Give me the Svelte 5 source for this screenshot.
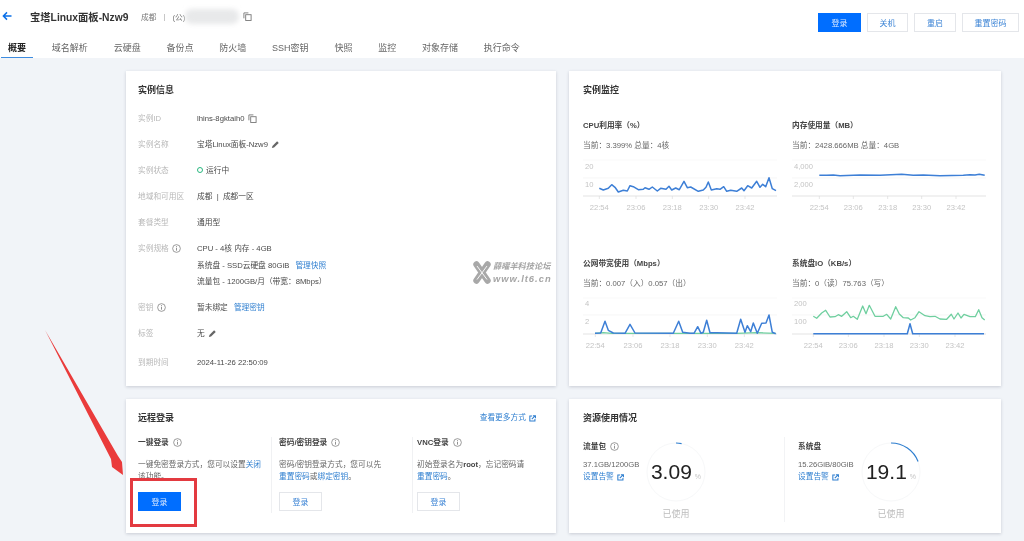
<script>
  const tabs = ["概要", "域名解析", "云硬盘", "备份点", "防火墙", "SSH密钥", "快照", "监控", "对象存储", "执行命令"];
  const times = ["22:54", "23:06", "23:18", "23:30", "23:42"];

  /* samples are [x, y] at 3x, shifted back by the chart offset */
  function pts(raw, ox, oy) {
    return raw.map(([x, y]) => (x / 3 - ox).toFixed(1) + "," + (y / 3 - oy).toFixed(1)).join(" ");
  }

  const charts = [
    {
      title: "CPU利用率（%）",
      sub: "当前：3.399% 总量：4核",
      yl: [["20", 8.7], ["10", 26.7]],
      yx: 2,
      ticks: [88, 198, 307, 416, 525].map((x) => x / 3 - 13),
      grid: 21,
      green: null,
      blue: pts([[88,355],[100,360],[115,355],[125,344],[135,352],[145,366],[160,361],[172,363],[180,347],[190,350],[205,359],[220,358],[225,353],[237,358],[247,351],[262,363],[272,355],[288,358],[297,349],[305,360],[317,354],[328,359],[342,334],[352,353],[362,351],[385,364],[400,360],[408,352],[415,336],[424,360],[440,356],[450,358],[461,350],[470,364],[482,361],[500,364],[515,354],[522,362],[533,347],[545,354],[560,334],[570,352],[578,343],[587,350],[597,323],[607,356],[618,362]], 13, 87),
    },
    {
      title: "内存使用量（MB）",
      sub: "当前：2428.666MB 总量：4GB",
      yl: [["4,000", 8.7], ["2,000", 26.7]],
      yx: 2,
      ticks: [118, 220, 323, 425, 528].map((x) => x / 3 - 12),
      grid: 21,
      green: null,
      blue: pts([[118,226],[140,226],[160,225],[180,227],[240,225],[300,226],[365,223],[400,226],[430,225],[480,227],[550,226],[570,224],[585,225],[598,223],[614,226]], 12, 57),
    },
    {
      title: "公网带宽使用（Mbps）",
      sub: "当前：0.007（入）0.057（出）",
      yl: [["4", 8], ["2", 26]],
      yx: 2,
      ticks: [76, 189, 300, 412, 523].map((x) => x / 3 - 13),
      grid: 20,
      green: pts([[75,283],[100,281],[125,283],[300,283],[500,283],[560,281],[617,283]], 13, 56),
      blue: pts([[75,283],[92,282],[105,247],[115,274],[130,282],[165,283],[180,256],[195,282],[310,283],[326,247],[338,280],[360,283],[372,283],[383,263],[393,283],[400,280],[410,244],[420,281],[440,281],[500,283],[512,241],[525,280],[532,260],[542,278],[550,252],[562,283],[575,253],[588,252],[597,228],[607,280],[617,284]], 13, 56),
    },
    {
      title: "系统盘IO（KB/s）",
      sub: "当前：0（读）75.763（写）",
      yl: [["200", 8], ["100", 26]],
      yx: 2,
      ticks: [100, 205, 312, 418, 525].map((x) => x / 3 - 12),
      grid: 20,
      green: pts([[100,232],[110,238],[125,222],[137,214],[150,234],[165,233],[175,227],[185,232],[200,218],[212,236],[220,232],[232,241],[248,201],[258,224],[268,199],[285,232],[310,232],[320,226],[332,240],[347,203],[358,225],[370,236],[385,237],[392,243],[405,236],[417,218],[435,230],[450,233],[465,232],[480,240],[500,241],[514,226],[522,240],[534,222],[543,237],[552,226],[570,233],[586,233],[596,212],[606,236],[614,243]], 12, 56),
      blue: pts([[100,284],[382,284],[390,254],[398,284],[612,284]], 12, 56),
    },
  ];

  const usage = [
    { name: "流量包", info: true, amount: "37.1GB/1200GB", pct: "3.09" },
    { name: "系统盘", info: false, amount: "15.26GiB/80GiB", pct: "19.1" },
  ];
  const ringLen = 2 * Math.PI * 29;
</script>

{#snippet copy()}
  <svg class="ico" viewBox="0 0 10 10" width="9" height="9"><path d="M1 7V1h5" fill="none" stroke="#777" stroke-width="1"/><rect x="3" y="3" width="6" height="6.4" fill="none" stroke="#777" stroke-width="1"/></svg>
{/snippet}
{#snippet pencil()}
  <svg class="ico" viewBox="0 0 10 10" width="9" height="9"><path d="M1 9l.6-2.4L6.8 1.4l1.8 1.8-5.2 5.2z" fill="#666"/></svg>
{/snippet}
{#snippet info()}
  <svg class="ico" viewBox="0 0 10 10" width="9" height="9"><circle cx="5" cy="5" r="4.3" fill="none" stroke="#777" stroke-width=".8"/><path d="M5 4.2v3.2M5 2.4v1" stroke="#777" stroke-width=".9"/></svg>
{/snippet}
{#snippet ext()}
  <svg class="ico" viewBox="0 0 10 10" width="7" height="7"><path d="M8.5 5.6v3H1.2V1.5h3.2" fill="none" stroke="#2f7fd0" stroke-width="1.5"/><path d="M4 6l4.6-4.6M5.6 1h3.6v3.6" fill="none" stroke="#2f7fd0" stroke-width="1.5"/></svg>
{/snippet}

<div class="page">
  <header>
    <div class="top">
      <svg class="back" viewBox="0 0 10 10" width="10" height="10"><path d="M9.5 5H1.5M5 1.4L1.4 5 5 8.6" fill="none" stroke="#0a6fe8" stroke-width="1.5"/></svg>
      <h1>宝塔Linux面板-Nzw9</h1>
      <span class="meta">成都</span>
      <span class="meta sep">|</span>
      <span class="meta">(公)</span>
      <span class="ip"></span>
      {@render copy()}
      <div class="actions">
        <button class="btn primary">登录</button>
        <button class="btn w41">关机</button>
        <button class="btn w42">重启</button>
        <button class="btn w57">重置密码</button>
      </div>
    </div>
    <nav>
      {#each tabs as t, i}
        <span class="tab" class:active={i === 0}>{t}</span>
      {/each}
    </nav>
  </header>

  <main>
    <section class="card">
      <h2>实例信息</h2>
      <div class="row"><span class="k">实例ID</span><span class="v">lhins-8gktaih0 {@render copy()}</span></div>
      <div class="row"><span class="k">实例名称</span><span class="v">宝塔Linux面板-Nzw9 {@render pencil()}</span></div>
      <div class="row"><span class="k">实例状态</span><span class="v"><i class="dot"></i>运行中</span></div>
      <div class="row"><span class="k">地域和可用区</span><span class="v">成都 &nbsp;|&nbsp; 成都一区</span></div>
      <div class="row"><span class="k">套餐类型</span><span class="v">通用型</span></div>
      <div class="row multi">
        <span class="k">实例规格 {@render info()}</span>
        <div>
          <div class="v">CPU - 4核 内存 - 4GB</div>
          <div class="v">系统盘 - SSD云硬盘 80GiB <a href="#a">管理快照</a></div>
          <div class="v">流量包 - 1200GB/月（带宽：8Mbps）</div>
        </div>
      </div>
      <div class="row"><span class="k">密钥 {@render info()}</span><span class="v">暂未绑定 <a href="#a">管理密钥</a></span></div>
      <div class="row"><span class="k">标签</span><span class="v">无 {@render pencil()}</span></div>
      <div class="row last"><span class="k">到期时间</span><span class="v">2024-11-26 22:50:09</span></div>
      <div class="mark">
        <svg viewBox="0 0 18 23" width="18" height="23">
          <path d="M3.5 3.5l11 16M14.5 3.5l-11 16" stroke="#a8a8a8" stroke-width="6.4" stroke-linecap="round" fill="none"/>
          <path d="M4 5l10 13.5M14 5L4 18.5" stroke="#fff" stroke-width=".9" fill="none"/>
        </svg>
        <div class="mark-text"><div>薛曜羊科技论坛</div><div class="url">www.lt6.cn</div></div>
      </div>
    </section>

    <section class="card">
      <h2>实例监控</h2>
      <div class="charts">
        {#each charts as c}
          <div class="chart">
            <div class="c-title">{c.title}</div>
            <div class="c-sub">{c.sub}</div>
            <svg viewBox="0 0 200 56" width="200" height="56">
              <line x1="0" x2="194" y1="3" y2="3" stroke="#f6f6f6" stroke-width=".7"/>
              <line x1="0" x2="194" y1={c.grid} y2={c.grid} stroke="#f2f2f2" stroke-width=".7"/>
              <line x1="0" x2="194" y1="39" y2="39" stroke="#dcdcdc" stroke-width=".8"/>
              {#each c.yl as [label, y]}
                <text x={c.yx} y={y + 3} class="axis">{label}</text>
              {/each}
              {#each c.ticks as x, i}
                <line x1={x} x2={x} y1="39" y2="42" stroke="#dcdcdc" stroke-width=".7"/>
                <text x={x} y="53" class="axis" text-anchor="middle">{times[i]}</text>
              {/each}
              {#if c.green}
                <polyline points={c.green} fill="none" stroke="#6fcf9f" stroke-width="1.3" stroke-linejoin="round"/>
              {/if}
              <polyline points={c.blue} fill="none" stroke="#3d7fd6" stroke-width="1.5" stroke-linejoin="round"/>
            </svg>
          </div>
        {/each}
      </div>
    </section>

    <section class="card login">
      <div class="login-head">
        <h2>远程登录</h2>
        <a href="#a" class="more">查看更多方式 {@render ext()}</a>
      </div>
      <div class="ways">
        <div class="way w1">
          <div class="way-t">一键登录 {@render info()}</div>
          <p>一键免密登录方式，您可以设置<a href="#a">关闭</a><br>该功能。</p>
          <button class="btn primary">登录</button>
        </div>
        <div class="way w2">
          <div class="way-t">密码/密钥登录 {@render info()}</div>
          <p>密码/密钥登录方式，您可以先<br><a href="#a">重置密码</a>或<a href="#a">绑定密钥</a>。</p>
          <button class="btn">登录</button>
        </div>
        <div class="way w3">
          <div class="way-t">VNC登录 {@render info()}</div>
          <p>初始登录名为<b>root</b>，忘记密码请<br><a href="#a">重置密码</a>。</p>
          <button class="btn">登录</button>
        </div>
      </div>
    </section>

    <section class="card usage">
      <h2>资源使用情况</h2>
      <div class="use-cols">
        {#each usage as u}
          <div class="use">
            <div class="use-info">
              <div class="way-t">{u.name} {#if u.info}{@render info()}{/if}</div>
              <div class="amount">{u.amount}</div>
              <a href="#a">设置告警 {@render ext()}</a>
            </div>
            <div class="ring-col">
              <div class="ring">
                <svg viewBox="0 0 64 64" width="64" height="64">
                  <circle cx="32" cy="32" r="29" fill="none" stroke="#f7f8f9" stroke-width="1"/>
                  <circle cx="32" cy="32" r="29" fill="none" stroke="#2f7fd0" stroke-width="1.2" transform="rotate(-90 32 32)" stroke-dasharray="{(u.pct * ringLen) / 100} {ringLen}"/>
                </svg>
                <div class="num">{u.pct}<small>%</small></div>
              </div>
              <div class="used">已使用</div>
            </div>
          </div>
        {/each}
      </div>
    </section>
  </main>

  <!-- annotation drawn on top of the screenshot -->
  <div class="redbox"></div>
  <svg class="arrow" viewBox="0 0 140 160" width="140" height="160">
    <polygon points="2,2 75,128 79,134 80,147 69,139 68,131" fill="#ea3b3b"/>
  </svg>
</div>

<style>
  :global(body) {
    margin: 0;
    background: #f1f4f8;
  }
  .page {
    position: relative;
    width: 1024px;
    height: 541px;
    overflow: hidden;
    background: #f1f4f8;
    color: #555;
    font-family: "Liberation Sans", "Noto Sans CJK SC", sans-serif;
    font-size: 7.7px;
    filter: blur(0.45px);
  }
  header {
    height: 58px;
    background: #fff;
  }
  .top {
    display: flex;
    align-items: center;
    height: 32px;
    padding-left: 2px;
  }
  .back {
    margin-right: 18px;
  }
  h1 {
    margin: 0 13px 0 0;
    width: 98px;
    font-size: 10.3px;
    font-weight: 600;
    color: #333;
    white-space: nowrap;
  }
  .meta {
    color: #777;
    margin-right: 7px;
  }
  .sep {
    color: #aaa;
  }
  .ip {
    width: 54px;
    height: 15px;
    margin: 0 3px 0 -7px;
    background: #e8e9ea;
    border-radius: 7px;
    filter: blur(2.5px);
  }
  .actions {
    display: flex;
    gap: 6px;
    align-self: flex-start;
    margin: 13px 5px 0 auto;
  }
  .btn {
    height: 19px;
    width: 43px;
    padding: 0;
    border: 1px solid #e4e6ea;
    background: #fff;
    color: #3f86d6;
    font: inherit;
    font-size: 8px;
  }
  .btn.primary {
    background: #006eff;
    border-color: #006eff;
    color: #d5e6ff;
  }
  .w41 { width: 41px; }
  .w42 { width: 42px; }
  .w57 { width: 57px; }
  nav {
    display: flex;
    gap: 11.8px;
    height: 26px;
    padding-left: 1px;
  }
  .tab {
    padding: 0 7px;
    line-height: 32px;
    height: 25px;
    font-size: 9px;
    color: #666;
  }
  .tab.active {
    color: #222;
    font-weight: 700;
    border-bottom: 1.5px solid #3d8ce0;
  }
  main {
    display: grid;
    grid-template-columns: 430px 432px;
    grid-template-rows: 315px 134px;
    gap: 13px;
    padding: 13px 0 0 126px;
  }
  .card {
    position: relative;
    box-sizing: border-box;
    padding: 13px 12px;
    background: #fff;
    box-shadow: 0 1px 3px rgba(60, 70, 90, 0.22);
  }
  .card:nth-child(even) {
    padding-left: 14px;
  }
  h2 {
    margin: 0;
    height: 12px;
    line-height: 12px;
    font-size: 9px;
    font-weight: 700;
    color: #333;
  }
  .row {
    display: flex;
    height: 16px;
    line-height: 16px;
    margin-bottom: 10px;
  }
  h2 + .row {
    margin-top: 15px;
  }
  .row.multi {
    height: 49px;
  }
  .row.multi .v {
    height: 16.5px;
    line-height: 16.5px;
  }
  .row.last {
    margin-top: 13px;
  }
  .k {
    width: 59px;
    flex: none;
    color: #b8b8b8;
  }
  .v {
    color: #4a4a4a;
    white-space: nowrap;
  }
  .v a {
    margin-left: 4px;
  }
  a {
    color: #2f7fd0;
    text-decoration: none;
  }
  .ico {
    vertical-align: -1.5px;
    margin-left: 1px;
  }
  .dot {
    display: inline-block;
    width: 4px;
    height: 4px;
    margin-right: 3px;
    border: 1.2px solid #29b87f;
    border-radius: 50%;
  }
  .mark {
    position: absolute;
    left: 347px;
    top: 188px;
    display: flex;
    gap: 2px;
    align-items: center;
    color: #a6a6a6;
    font-weight: 700;
    font-style: italic;
  }
  .mark-text {
    padding-top: 2px;
    line-height: 12px;
    font-size: 8.2px;
  }
  .url {
    font-size: 9.4px;
    letter-spacing: 1px;
  }
  .charts {
    display: grid;
    grid-template-columns: 209px 200px;
    grid-template-rows: 138px 110px;
    margin-top: 24px;
  }
  .c-title {
    height: 11px;
    line-height: 11px;
    font-weight: 700;
    color: #444;
    white-space: nowrap;
  }
  .c-sub {
    margin-top: 9px;
    height: 11px;
    line-height: 11px;
    color: #666;
    white-space: nowrap;
  }
  .chart svg {
    display: block;
    margin-top: 6px;
  }
  .axis {
    font-size: 7.6px;
    fill: #c4c4c4;
  }
  .login-head {
    display: flex;
    justify-content: space-between;
    padding-right: 8px;
    align-items: center;
  }
  .more {
    margin-top: -3px;
  }
  .ways {
    display: flex;
    margin-top: 13px;
    height: 80px;
  }
  .way {
    box-sizing: border-box;
    height: 76px;
  }
  .w1 { width: 133px; padding-right: 6px; }
  .w2 { width: 141px; padding: 0 6px 0 7px; border-left: 1px solid #f0f1f3; }
  .w3 { width: 130px; padding: 0 0 0 4px; border-left: 1px solid #f0f1f3; }
  .way-t {
    height: 12px;
    line-height: 12px;
    font-weight: 700;
    color: #444;
    white-space: nowrap;
  }
  .way-t .ico {
    margin-left: 2px;
  }
  .way p {
    margin: 10px 0 0;
    height: 24px;
    line-height: 11.5px;
    color: #666;
    white-space: nowrap;
  }
  .way b {
    color: #444;
  }
  .way .btn {
    display: block;
    margin-top: 9px;
  }
  .usage {
    padding-top: 13px;
  }
  .use-cols {
    display: flex;
    margin-top: 13px;
  }
  .use {
    display: flex;
    box-sizing: border-box;
    height: 85px;
    padding-top: 4px;
  }
  .use:first-child {
    width: 202px;
    border-right: 1px solid #f2f3f5;
  }
  .use:last-child {
    padding-left: 13px;
  }
  .use-info {
    width: 61px;
    flex: none;
    white-space: nowrap;
  }
  .amount {
    margin-top: 6px;
    line-height: 11px;
    color: #666;
  }
  .use-info a {
    display: block;
    margin-top: 1px;
    line-height: 12px;
  }
  .ring-col {
    width: 64px;
    text-align: center;
  }
  .ring {
    position: relative;
    width: 64px;
    height: 64px;
    margin-top: -1px;
  }
  .ring svg {
    display: block;
  }
  .num {
    position: absolute;
    inset: 0;
    display: flex;
    align-items: baseline;
    justify-content: center;
    padding-top: 20px;
    font-size: 21px;
    line-height: 24px;
    color: #222;
  }
  .num small {
    margin-left: 3px;
    font-size: 7px;
    color: #c4c4c4;
  }
  .used {
    margin-top: 4px;
    font-size: 9px;
    line-height: 12px;
    color: #bdbdbd;
  }
  .redbox {
    position: absolute;
    left: 130px;
    top: 478px;
    width: 61px;
    height: 43px;
    border: 3.5px solid #e33a40;
  }
  .arrow {
    position: absolute;
    left: 43px;
    top: 328px;
  }
</style>
